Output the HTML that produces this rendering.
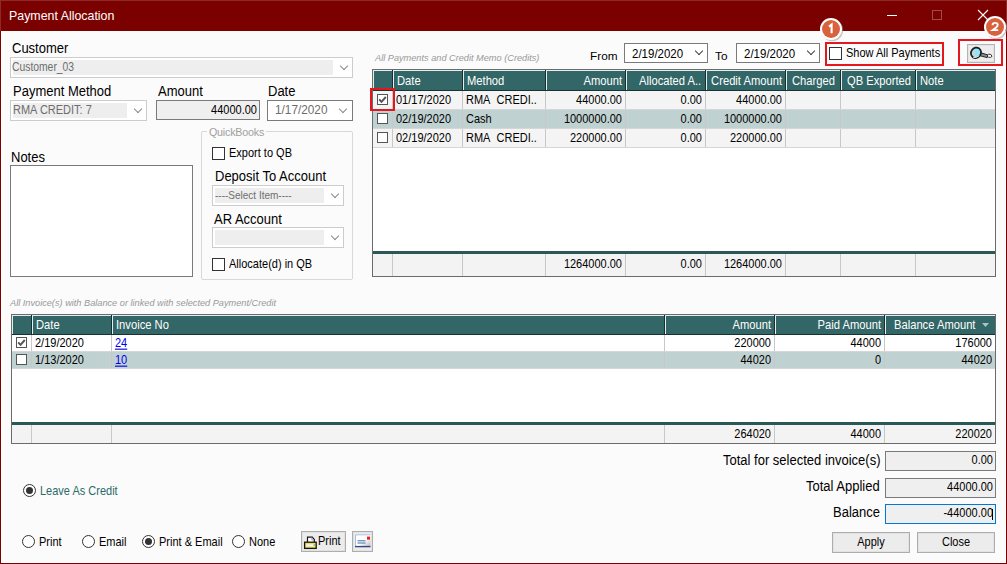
<!DOCTYPE html>
<html><head><meta charset="utf-8">
<style>
*{box-sizing:border-box;margin:0;padding:0}
html,body{width:1007px;height:564px;overflow:hidden;background:#fbfbfb;font-family:"Liberation Sans",sans-serif;position:relative}
.a{position:absolute;white-space:nowrap}
#win{position:absolute;left:0;top:0;width:1007px;height:564px;background:#fbfbfb;border:1px solid #7a0000;box-shadow:inset 1px -1px 0 #fff, inset -1px 0 0 #fff}
#title{position:absolute;left:0;top:0;width:1007px;height:31px;background:#7b0000;border:1px solid #8e2a2a;border-bottom:0}
.lbl{position:absolute;white-space:nowrap;font-size:13px;color:#000;line-height:15px}
.combo{position:absolute;border:1px solid #cccccc;background:#fff}
.combo .in{position:absolute;left:2px;top:2px;bottom:2px;background:#eeeeee}
.combo .tx{position:absolute;left:2px;top:2px;font-size:11px;color:#6d6d6d;line-height:15px;white-space:nowrap}
.chev{position:absolute;width:6px;height:6px;border-right:1px solid #8a8a8a;border-bottom:1px solid #8a8a8a;transform:rotate(45deg)}
.tb{position:absolute;border:1px solid #7a7a7a;background:#efefef;font-size:11px;text-align:right;line-height:17px;padding-right:2px;color:#000;white-space:nowrap}
.cb{position:absolute;width:13px;height:13px;border:1px solid #333;background:#fff}
.grid{position:absolute;border:1px solid #6b6b6b;background:#fff;overflow:hidden}
.hdr{position:absolute;left:0;top:0;right:0;background:#336666;border-bottom:1px solid #173232}
.hc{position:absolute;top:0;height:100%;color:#fff;font-size:11.2px;border-right:1px solid #163030;box-shadow:inset 1px 1px 0 #e4eeee;padding:0 4px;overflow:hidden;white-space:nowrap}
.row{position:absolute;left:0;right:0;background:#f4f4f4;border-bottom:1px solid #d6d6d6}
.row.alt{background:#c0d1d1}
.c{position:absolute;top:0;height:100%;font-size:11px;color:#000;border-right:1px solid #c8c8c8;padding:0 3px;overflow:hidden;white-space:nowrap}
.r{text-align:right}
.t{display:inline-block;transform:scaleY(1.12)}
.hc.r{padding-right:3px}
.foot{position:absolute;left:0;right:0;bottom:0;background:#f3f3f3;border-top:3px solid #2a5858}
.redbox{position:absolute;border:2px solid #e4161e}
.badge{position:absolute;width:22px;height:22px;border-radius:50%;background:#d9633f;border:2px solid #fff;box-shadow:1px 1px 2px rgba(0,0,0,.35);color:#fff;font-weight:bold;font-size:12px;text-align:center;line-height:18px}
.radio{position:absolute;width:13px;height:13px;border:1px solid #333;border-radius:50%;background:#fff}
.radio.on::after{content:"";position:absolute;left:2px;top:2px;width:7px;height:7px;border-radius:50%;background:#333}
.btn{position:absolute;border:1px solid #adadad;background:#ececec;box-shadow:inset 0 0 0 1px #e2e2e2;font-size:11px;text-align:center;color:#000;white-space:nowrap}
.tick{position:absolute;left:2px;top:2px}
</style></head><body>
<div id="win"></div>
<div id="title">
  <div class="a" style="left:8px;top:8px;font-size:12.4px;color:#fff;line-height:14px">Payment Allocation</div>
  <div class="a" style="left:886px;top:14px;width:10px;height:1px;background:#fff"></div>
  <div class="a" style="left:931px;top:9px;width:10px;height:10px;border:1px solid #a04a4a"></div>
  <svg class="a" style="left:976px;top:8px" width="12" height="12" viewBox="0 0 12 12"><path d="M1 1L11 11M11 1L1 11" stroke="#fff" stroke-width="1.1"/></svg>
</div>

<!-- LEFT PANEL -->
<div class="lbl" style="left:12px;top:41px"><span class="t" style="transform:scaleY(1.1)">Customer</span></div>
<div class="combo" style="left:10px;top:57px;width:343px;height:21px">
  <div class="in" style="width:320px"></div>
  <div class="tx" style="left:1px"><span class="t" style="transform:scale(0.94,1.1);transform-origin:0 50%">Customer_03</span></div>
  <div class="chev" style="left:330px;top:5px"></div>
</div>

<div class="lbl" style="left:13px;top:84px"><span class="t" style="transform:scaleY(1.1)">Payment Method</span></div>
<div class="combo" style="left:10px;top:100px;width:137px;height:21px">
  <div class="in" style="width:114px"></div>
  <div class="tx"><span class="t">RMA CREDIT: 7</span></div>
  <div class="chev" style="left:124px;top:5px"></div>
</div>
<div class="lbl" style="left:158px;top:84px"><span class="t" style="transform:scaleY(1.1)">Amount</span></div>
<div class="tb" style="left:156px;top:100px;width:104px;height:20px;line-height:18px"><span class="t">44000.00</span></div>
<div class="lbl" style="left:268px;top:84px"><span class="t" style="transform:scaleY(1.1)">Date</span></div>
<div class="combo" style="left:267px;top:100px;width:86px;height:21px;border-color:#7a7a7a">
  <div class="tx" style="left:7px;color:#6d6d6d;font-size:11.8px"><span class="t" style="transform:scaleY(1.05)">1/17/2020</span></div>
  <div class="chev" style="left:72px;top:5px"></div>
</div>

<div class="lbl" style="left:11px;top:150px"><span class="t" style="transform:scaleY(1.1)">Notes</span></div>
<div class="a" style="left:10px;top:165px;width:183px;height:112px;border:1px solid #7a7a7a;background:#fff"></div>

<!-- QuickBooks group -->
<div class="a" style="left:201px;top:131px;width:152px;height:149px;border:1px solid #d8d8d8;border-radius:2px"></div>
<div class="a" style="left:207px;top:126px;background:#fbfbfb;padding:0 2px;font-size:10.7px;color:#a0a0a0;line-height:13px;letter-spacing:-0.2px">QuickBooks</div>
<div class="cb" style="left:212px;top:147px"></div>
<div class="a" style="left:229px;top:147px;font-size:11px;line-height:13px"><span class="t">Export to QB</span></div>
<div class="lbl" style="left:215px;top:169px"><span class="t" style="transform:scaleY(1.1)">Deposit To Account</span></div>
<div class="combo" style="left:212px;top:185px;width:132px;height:21px">
  <div class="in" style="width:109px"></div>
  <div class="tx" style="font-size:10px"><span class="t">----Select Item----</span></div>
  <div class="chev" style="left:119px;top:5px"></div>
</div>
<div class="lbl" style="left:214px;top:212px"><span class="t" style="transform:scaleY(1.1)">AR Account</span></div>
<div class="combo" style="left:212px;top:227px;width:132px;height:21px">
  <div class="in" style="width:109px"></div>
  <div class="chev" style="left:119px;top:5px"></div>
</div>
<div class="cb" style="left:212px;top:258px"></div>
<div class="a" style="left:229px;top:258px;font-size:11px;line-height:13px"><span class="t">Allocate(d) in QB</span></div>

<!-- RIGHT TOP -->
<div class="a" style="left:375px;top:52px;font-size:9.2px;font-style:italic;color:#999;line-height:12px">All Payments and Credit Memo (Credits)</div>
<div class="a" style="left:590px;top:49px;font-size:11.8px;line-height:14px">From</div>
<div class="combo" style="left:624px;top:43px;width:84px;height:20px;border-color:#7a7a7a">
  <div class="tx" style="left:7px;top:2px;color:#000;font-size:11.5px"><span class="t" style="transform:scaleY(1.16)">2/19/2020</span></div>
  <div class="chev" style="left:71px;top:4px;border-color:#444"></div>
</div>
<div class="a" style="left:715px;top:49px;font-size:11.8px;line-height:14px">To</div>
<div class="combo" style="left:736px;top:43px;width:84px;height:20px;border-color:#7a7a7a">
  <div class="tx" style="left:7px;top:2px;color:#000;font-size:11.5px"><span class="t" style="transform:scaleY(1.16)">2/19/2020</span></div>
  <div class="chev" style="left:71px;top:4px;border-color:#444"></div>
</div>
<div class="redbox" style="left:825px;top:42px;width:119px;height:24px"></div>
<div class="cb" style="left:829px;top:47px;border-color:#333"></div>
<div class="a" style="left:846px;top:46px;font-size:11px;line-height:14px"><span class="t">Show All Payments</span></div>
<div class="redbox" style="left:958px;top:39px;width:45px;height:27px"></div>
<div class="a" style="left:967px;top:44px;width:28px;height:19px;border:1px solid #b4b4b4;background:#ededed;box-shadow:inset 0 0 0 1px #e4e4e4"></div>
<svg class="a" style="left:967px;top:44px" width="28" height="19" viewBox="0 0 28 19">
  <defs><linearGradient id="lg" x1="1" y1="0" x2="0" y2="1"><stop offset="0.45" stop-color="#8fe6f4"/><stop offset="0.75" stop-color="#c9d6e0"/></linearGradient></defs>
  <path d="M13.2 8.6L21 11L20.2 13.6L12.6 11.6Z" fill="#8a8a8a" stroke="#202020" stroke-width="1"/>
  <path d="M21.2 10.2Q24.6 9.6 25 12.3Q24.2 14 21.2 13.2" fill="#fff" stroke="#333" stroke-width="1"/>
  <ellipse cx="9" cy="8.8" rx="4.9" ry="5.4" transform="rotate(35 9 8.8)" fill="url(#lg)" stroke="#1a1a1a" stroke-width="1.7"/>
  <path d="M6.2 13.4Q9.8 14 12.3 11.6" stroke="#f4f4f4" stroke-width="1" fill="none"/>
</svg>
<svg class="a" style="left:818px;top:16px" width="28" height="28" viewBox="0 0 28 28">
  <circle cx="14.2" cy="14.2" r="11" fill="#9a9a9a" opacity=".55"/>
  <circle cx="13" cy="13" r="11" fill="#fff"/>
  <circle cx="13" cy="13" r="9" fill="#d9623e"/>
  <path d="M11 10.6L13.6 8.6V17.2" stroke="#fff" stroke-width="2.1" fill="none"/>
</svg>
<svg class="a" style="left:982px;top:14px" width="28" height="28" viewBox="0 0 28 28">
  <circle cx="14.2" cy="14.2" r="11" fill="#9a9a9a" opacity=".55"/>
  <circle cx="13" cy="13" r="11" fill="#fff"/>
  <circle cx="13" cy="13" r="9" fill="#d9623e"/>
  <path d="M10.6 11.2Q10.6 8.9 13.2 8.9Q15.7 8.9 15.7 11Q15.7 12.3 13.8 13.7L10.7 16.1H16.2" stroke="#fff" stroke-width="1.9" fill="none"/>
</svg>

<!-- GRID 1 -->
<div class="grid" style="left:372px;top:69px;width:624px;height:208px">
  <div class="hdr" style="height:21px">
    <div class="hc" style="left:0;width:20px"></div>
    <div class="hc" style="left:20px;width:70px;line-height:22px"><span class="t">Date</span></div>
    <div class="hc" style="left:90px;width:83px;line-height:22px"><span class="t">Method</span></div>
    <div class="hc r" style="left:173px;width:80px;line-height:22px"><span class="t">Amount</span></div>
    <div class="hc" style="left:253px;width:80px;line-height:22px;padding-left:13px"><span class="t">Allocated A..</span></div>
    <div class="hc r" style="left:333px;width:80px;line-height:22px"><span class="t">Credit Amount</span></div>
    <div class="hc" style="left:413px;width:55px;line-height:22px;padding-left:6px"><span class="t">Charged</span></div>
    <div class="hc" style="left:468px;width:75px;line-height:22px;padding-left:6px"><span class="t">QB Exported</span></div>
    <div class="hc" style="left:543px;width:81px;line-height:22px;border-right:0"><span class="t">Note</span></div>
  </div>
  <div class="row" style="top:21px;height:19px">
    <div class="c" style="left:0;width:20px"><div class="cb" style="left:4px;top:3px;width:11px;height:11px;border-color:#555"></div><svg class="a" style="left:5px;top:4px" width="9" height="9" viewBox="0 0 9 9"><path d="M1.2 4.3L3.5 6.8L7.8 2" stroke="#555" stroke-width="1.9" fill="none"/></svg></div>
    <div class="c" style="left:20px;width:70px;line-height:18px"><span class="t">01/17/2020</span></div>
    <div class="c" style="left:90px;width:83px;line-height:18px"><span class="t">RMA&nbsp; CREDI..</span></div>
    <div class="c r" style="left:173px;width:80px;line-height:18px"><span class="t">44000.00</span></div>
    <div class="c r" style="left:253px;width:80px;line-height:18px"><span class="t">0.00</span></div>
    <div class="c r" style="left:333px;width:80px;line-height:18px"><span class="t">44000.00</span></div>
    <div class="c" style="left:413px;width:55px"></div>
    <div class="c" style="left:468px;width:75px"></div>
    <div class="c" style="left:543px;width:81px;border-right:0"></div>
  </div>
  <div class="row alt" style="top:40px;height:19px">
    <div class="c" style="left:0;width:20px"><div class="cb" style="left:4px;top:3px;width:11px;height:11px;border-color:#555"></div></div>
    <div class="c" style="left:20px;width:70px;line-height:18px"><span class="t">02/19/2020</span></div>
    <div class="c" style="left:90px;width:83px;line-height:18px"><span class="t">Cash</span></div>
    <div class="c r" style="left:173px;width:80px;line-height:18px"><span class="t">1000000.00</span></div>
    <div class="c r" style="left:253px;width:80px;line-height:18px"><span class="t">0.00</span></div>
    <div class="c r" style="left:333px;width:80px;line-height:18px"><span class="t">1000000.00</span></div>
    <div class="c" style="left:413px;width:55px"></div>
    <div class="c" style="left:468px;width:75px"></div>
    <div class="c" style="left:543px;width:81px;border-right:0"></div>
  </div>
  <div class="row" style="top:59px;height:19px">
    <div class="c" style="left:0;width:20px"><div class="cb" style="left:4px;top:3px;width:11px;height:11px;border-color:#555"></div></div>
    <div class="c" style="left:20px;width:70px;line-height:18px"><span class="t">02/19/2020</span></div>
    <div class="c" style="left:90px;width:83px;line-height:18px"><span class="t">RMA&nbsp; CREDI..</span></div>
    <div class="c r" style="left:173px;width:80px;line-height:18px"><span class="t">220000.00</span></div>
    <div class="c r" style="left:253px;width:80px;line-height:18px"><span class="t">0.00</span></div>
    <div class="c r" style="left:333px;width:80px;line-height:18px"><span class="t">220000.00</span></div>
    <div class="c" style="left:413px;width:55px"></div>
    <div class="c" style="left:468px;width:75px"></div>
    <div class="c" style="left:543px;width:81px;border-right:0"></div>
  </div>
  <div class="foot" style="height:25px">
    <div class="c" style="left:0;width:20px"></div>
    <div class="c" style="left:20px;width:70px"></div>
    <div class="c" style="left:90px;width:83px"></div>
    <div class="c r" style="left:173px;width:80px;line-height:21px"><span class="t">1264000.00</span></div>
    <div class="c r" style="left:253px;width:80px;line-height:21px"><span class="t">0.00</span></div>
    <div class="c r" style="left:333px;width:80px;line-height:21px"><span class="t">1264000.00</span></div>
    <div class="c" style="left:413px;width:55px"></div>
    <div class="c" style="left:468px;width:75px"></div>
    <div class="c" style="left:543px;width:81px;border-right:0"></div>
  </div>
</div>
<div class="redbox" style="left:370px;top:88px;width:25px;height:23px"></div>

<!-- GRID 2 -->
<div class="a" style="left:10px;top:297px;font-size:9.2px;font-style:italic;color:#999;line-height:12px">All Invoice(s) with Balance or linked with selected Payment/Credit</div>
<div class="grid" style="left:11px;top:314px;width:985px;height:130px">
  <div class="hdr" style="height:20px">
    <div class="hc" style="left:0;width:20px"></div>
    <div class="hc" style="left:20px;width:80px;line-height:21px"><span class="t">Date</span></div>
    <div class="hc" style="left:100px;width:553px;line-height:21px"><span class="t">Invoice No</span></div>
    <div class="hc r" style="left:653px;width:110px;line-height:21px"><span class="t">Amount</span></div>
    <div class="hc r" style="left:763px;width:110px;line-height:21px"><span class="t">Paid Amount</span></div>
    <div class="hc" style="left:873px;width:111px;line-height:21px;border-right:0;padding-left:9px"><span class="t">Balance Amount</span></div>
    <svg class="a" style="left:970px;top:8px" width="7" height="4" viewBox="0 0 7 4"><path d="M0 0H7L3.5 4Z" fill="#a8c4c4"/></svg>
  </div>
  <div class="row" style="top:20px;height:17px;background:#fff">
    <div class="c" style="left:0;width:20px"><div class="cb" style="left:4px;top:2px;width:11px;height:11px;border-color:#555"></div><svg class="a" style="left:5px;top:3px" width="9" height="9" viewBox="0 0 9 9"><path d="M1.2 4.3L3.5 6.8L7.8 2" stroke="#555" stroke-width="1.9" fill="none"/></svg></div>
    <div class="c" style="left:20px;width:80px;line-height:16px"><span class="t">2/19/2020</span></div>
    <div class="c" style="left:100px;width:553px;line-height:16px;color:#0000ee"><span class="t" style="text-decoration:underline">24</span></div>
    <div class="c r" style="left:653px;width:110px;line-height:16px"><span class="t">220000</span></div>
    <div class="c r" style="left:763px;width:110px;line-height:16px"><span class="t">44000</span></div>
    <div class="c r" style="left:873px;width:111px;line-height:16px;border-right:0;padding-right:4px"><span class="t">176000</span></div>
  </div>
  <div class="row alt" style="top:37px;height:17px">
    <div class="c" style="left:0;width:20px"><div class="cb" style="left:4px;top:2px;width:11px;height:11px;border-color:#555"></div></div>
    <div class="c" style="left:20px;width:80px;line-height:16px"><span class="t">1/13/2020</span></div>
    <div class="c" style="left:100px;width:553px;line-height:16px;color:#0000ee"><span class="t" style="text-decoration:underline">10</span></div>
    <div class="c r" style="left:653px;width:110px;line-height:16px"><span class="t">44020</span></div>
    <div class="c r" style="left:763px;width:110px;line-height:16px"><span class="t">0</span></div>
    <div class="c r" style="left:873px;width:111px;line-height:16px;border-right:0;padding-right:4px"><span class="t">44020</span></div>
  </div>
  <div class="foot" style="height:21px">
    <div class="c" style="left:0;width:20px"></div>
    <div class="c" style="left:20px;width:80px"></div>
    <div class="c" style="left:100px;width:553px"></div>
    <div class="c r" style="left:653px;width:110px;line-height:18px"><span class="t">264020</span></div>
    <div class="c r" style="left:763px;width:110px;line-height:18px"><span class="t">44000</span></div>
    <div class="c r" style="left:873px;width:111px;line-height:18px;border-right:0;padding-right:4px"><span class="t">220020</span></div>
  </div>
</div>

<!-- BOTTOM -->
<div class="lbl" style="left:723px;top:453px"><span class="t" style="transform:scaleY(1.1)">Total for selected invoice(s)</span></div>
<div class="tb" style="left:885px;top:451px;width:111px;height:20px"><span class="t">0.00</span></div>
<div class="lbl" style="left:806px;top:479px"><span class="t" style="transform:scaleY(1.1)">Total Applied</span></div>
<div class="tb" style="left:885px;top:478px;width:111px;height:20px"><span class="t">44000.00</span></div>
<div class="lbl" style="left:833px;top:505px"><span class="t" style="transform:scaleY(1.1)">Balance</span></div>
<div class="tb" style="left:885px;top:504px;width:111px;height:20px;border-color:#0078d7"><span class="t">-44000.00</span></div>
<div class="a" style="left:992px;top:509px;width:1px;height:11px;background:#000"></div>
<div class="btn" style="left:832px;top:532px;width:78px;height:21px;line-height:19px"><span class="t">Apply</span></div>
<div class="btn" style="left:917px;top:532px;width:78px;height:21px;line-height:19px"><span class="t">Close</span></div>

<div class="radio on" style="left:23px;top:484px"></div>
<div class="a" style="left:40px;top:485px;font-size:11px;line-height:13px;color:#2b6a6a"><span class="t">Leave As Credit</span></div>

<div class="radio" style="left:22px;top:535px"></div>
<div class="a" style="left:39px;top:536px;font-size:11px;line-height:13px"><span class="t">Print</span></div>
<div class="radio" style="left:82px;top:535px"></div>
<div class="a" style="left:99px;top:536px;font-size:11px;line-height:13px"><span class="t">Email</span></div>
<div class="radio on" style="left:142px;top:535px"></div>
<div class="a" style="left:159px;top:536px;font-size:11px;line-height:13px"><span class="t">Print &amp; Email</span></div>
<div class="radio" style="left:232px;top:535px"></div>
<div class="a" style="left:249px;top:536px;font-size:11px;line-height:13px"><span class="t">None</span></div>

<div class="btn" style="left:301px;top:531px;width:45px;height:21px"></div>
<svg class="a" style="left:303px;top:535px" width="15" height="15" viewBox="0 0 15 15">
  <path d="M4.5 7V2.2H9.3L11.3 4.5V7" fill="#fff" stroke="#151515" stroke-width="1.2"/>
  <path d="M8.8 2.5V5H11" fill="none" stroke="#9a9aa8" stroke-width="0.9"/>
  <rect x="1.6" y="7.2" width="11.6" height="6.2" fill="#f3d862" stroke="#151515" stroke-width="1.3"/>
  <rect x="3" y="9.4" width="8.8" height="2" fill="#f4f6ff"/>
  <rect x="10.6" y="9.4" width="1.3" height="1.3" fill="#2ec02e"/>
</svg>
<div class="a" style="left:318px;top:534px;font-size:11px;line-height:14px"><span class="t">Print</span></div>
<div class="btn" style="left:352px;top:531px;width:21px;height:21px"></div>
<svg class="a" style="left:355px;top:534px" width="16" height="14" viewBox="0 0 16 14">
  <defs><linearGradient id="eg" x1="0" y1="0" x2="1" y2="1"><stop offset="0.55" stop-color="#fff"/><stop offset="1" stop-color="#b8b8b8"/></linearGradient></defs>
  <rect x="0.5" y="0.5" width="15" height="12" fill="url(#eg)"/>
  <path d="M0.5 12.5V0.8H15.5" fill="none" stroke="#a9c0de" stroke-width="1"/>
  <path d="M0 12.6H15.5" stroke="#2f4f84" stroke-width="1.4"/>
  <path d="M2.5 6.8H10.5M2.5 9H10.5" stroke="#3f6aa8" stroke-width="1"/>
  <rect x="12" y="2.6" width="3" height="3" fill="#ee1c1c"/>
</svg>
</body></html>
